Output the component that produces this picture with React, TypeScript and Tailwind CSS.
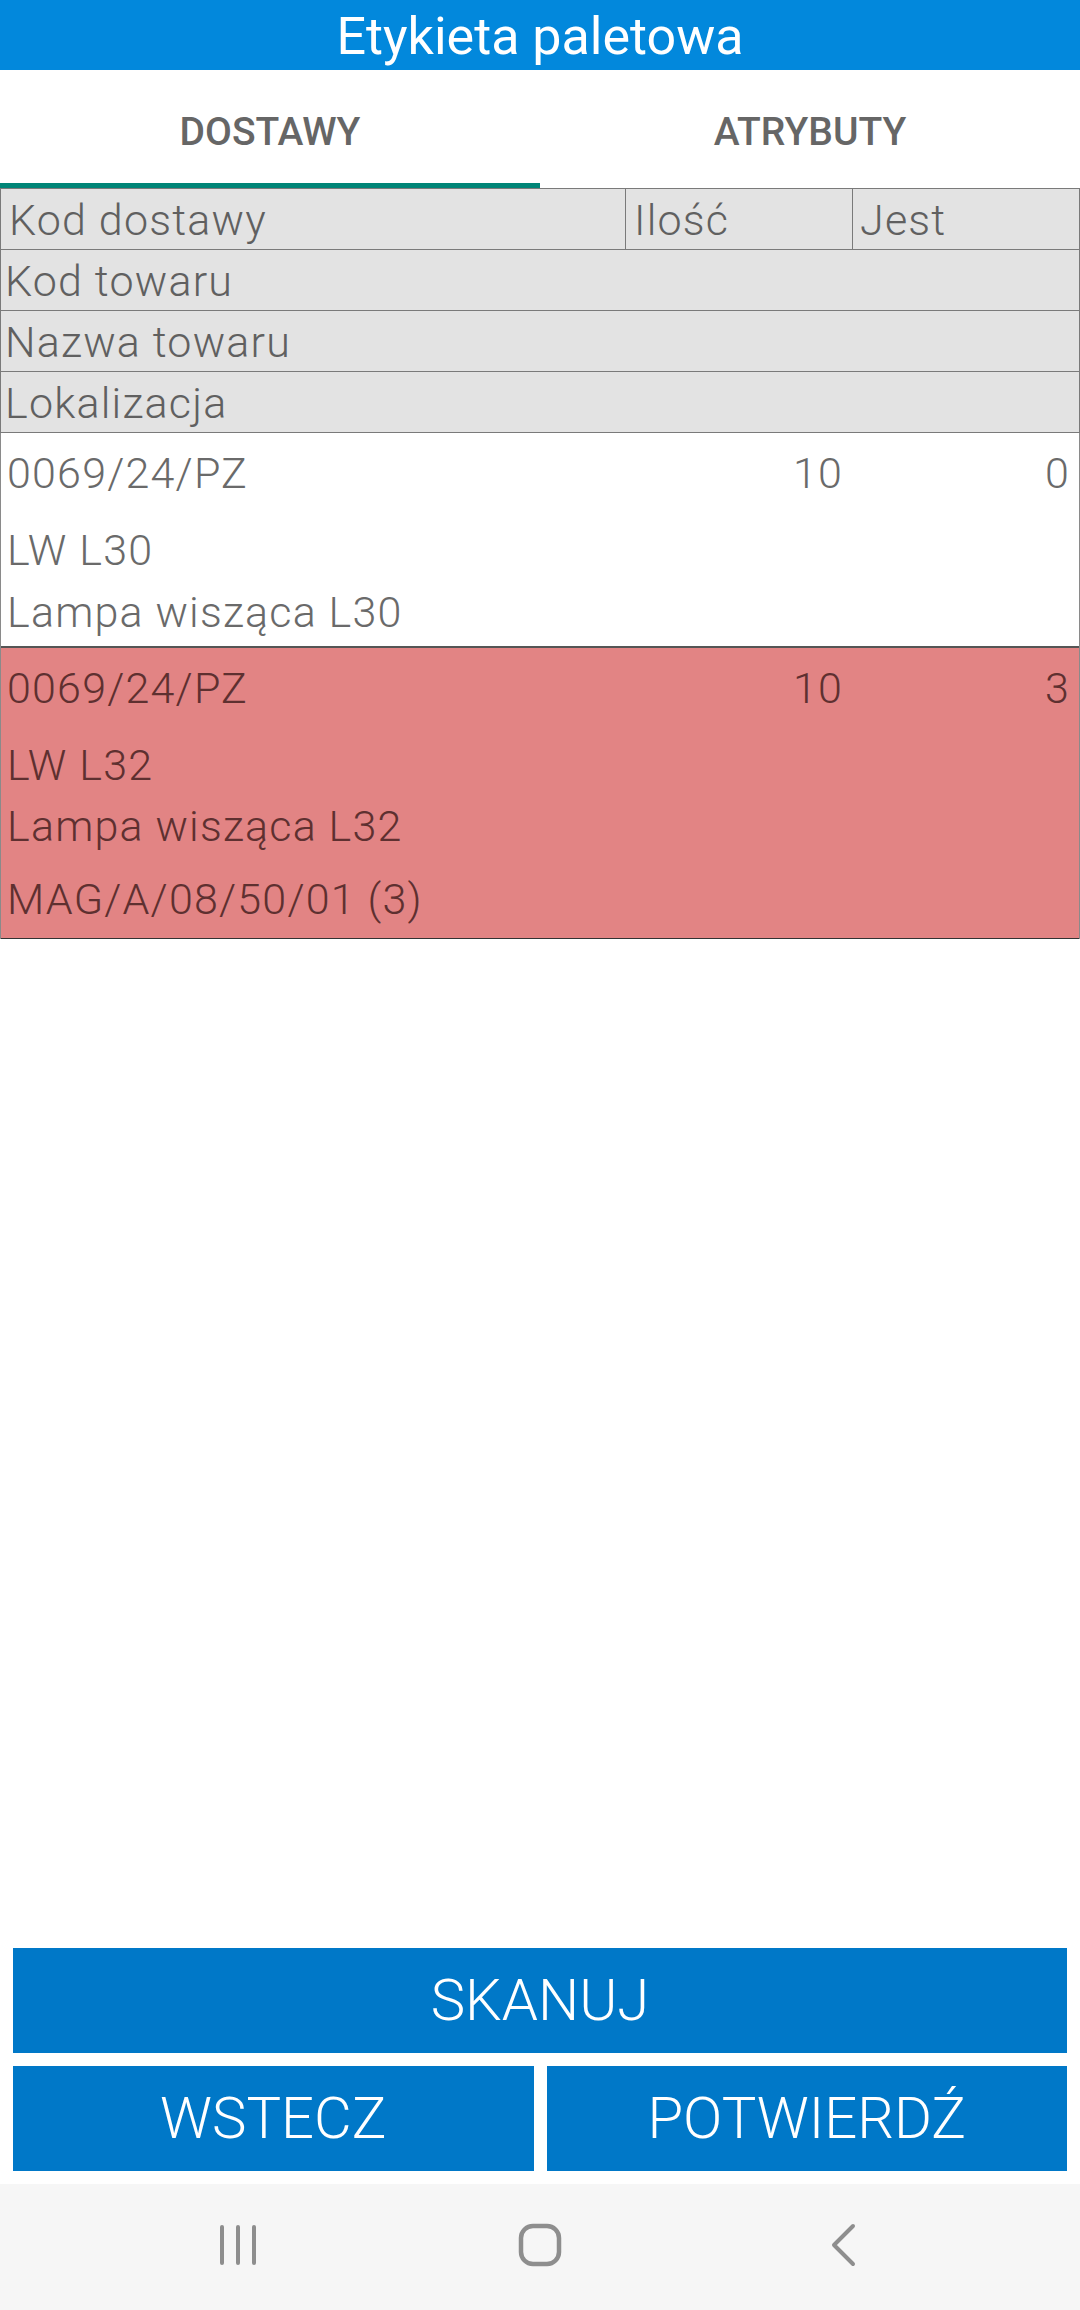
import React from 'react'

const headRows = ['Kod towaru', 'Nazwa towaru', 'Lokalizacja']

function NavIcons() {
  return (
    <div className="flex h-[126px] items-center justify-center gap-[242px] bg-[#f6f6f6] pb-[4px]">
      <div className="flex w-[60px] justify-center">
        <svg width="40" height="42" viewBox="0 0 40 42">
          <g stroke="#8e8e8e" strokeWidth="4" strokeLinecap="round">
            <line x1="4" y1="3" x2="4" y2="39" />
            <line x1="20" y1="3" x2="20" y2="39" />
            <line x1="36" y1="3" x2="36" y2="39" />
          </g>
        </svg>
      </div>
      <div className="flex w-[60px] justify-center">
        <svg width="44" height="44" viewBox="0 0 44 44">
          <rect x="3" y="3" width="38" height="38" rx="12" fill="none" stroke="#8e8e8e" strokeWidth="4.5" />
        </svg>
      </div>
      <div className="flex w-[60px] justify-center">
        <svg width="30" height="44" viewBox="0 0 30 44">
          <polyline points="26,3 7,22 26,41" fill="none" stroke="#8e8e8e" strokeWidth="4" strokeLinecap="round" strokeLinejoin="round" />
        </svg>
      </div>
    </div>
  )
}

export default function App() {
  return (
    <div className="flex h-[2310px] w-[1080px] flex-col bg-white font-['Roboto',sans-serif]">
      {/* Toolbar */}
      <div className="h-[70px] bg-[#0288dc] pt-[4px] text-center text-[52px] leading-[66px] text-white">
        Etykieta paletowa
      </div>

      {/* Tabs */}
      <div className="flex">
        <div className="flex w-1/2 flex-col">
          <div className="h-[113px] pt-[39px] text-center text-[39px] font-medium leading-[46px] text-[#666666]">
            DOSTAWY
          </div>
          <div className="h-[5px] bg-[#008577]" />
        </div>
        <div className="flex w-1/2 flex-col">
          <div className="h-[113px] pt-[39px] text-center text-[39px] font-medium leading-[46px] text-[#666666]">
            ATRYBUTY
          </div>
          <div className="h-[5px]" />
        </div>
      </div>

      {/* Table header */}
      <div className="border-x border-t border-[#7a7a7a] bg-[#e3e3e3] text-[43px] font-light tracking-[1.2px] text-[#606060]">
        <div className="grid h-[61px] grid-cols-[624px_227px_1fr] border-b border-[#7a7a7a]">
          <div className="pl-[8px] pt-[3px] leading-[57px]">Kod dostawy</div>
          <div className="border-l border-[#7a7a7a] pl-[8px] pt-[3px] leading-[57px]">Ilość</div>
          <div className="border-l border-[#7a7a7a] pl-[7px] pt-[3px] leading-[57px]">Jest</div>
        </div>
        {headRows.map((t) => (
          <div key={t} className="h-[61px] border-b border-[#7a7a7a] pl-[4px] pt-[3px] leading-[57px]">
            {t}
          </div>
        ))}
      </div>

      {/* Data rows */}
      <div className="border-x border-[#8a8a8a] text-[43px] font-light leading-[49px] tracking-[1.2px]">
        <div className="border-b-2 border-[#555555] px-[6px] pb-[9px] pt-[16px] text-[#6a6a6a]">
          <div className="grid grid-cols-[619px_227px_1fr]">
            <div>0069/24/PZ</div>
            <div className="pr-[10px] text-right">10</div>
            <div className="pr-[3px] text-right">0</div>
          </div>
          <div className="mt-[28px]">LW L30</div>
          <div className="mt-[13px]">Lampa wisząca L30</div>
        </div>
        <div className="border-b border-[#333333] bg-[#e28484] px-[6px] pb-[14px] pt-[16px] text-[#5e3030]">
          <div className="grid grid-cols-[619px_227px_1fr]">
            <div>0069/24/PZ</div>
            <div className="pr-[10px] text-right">10</div>
            <div className="pr-[3px] text-right">3</div>
          </div>
          <div className="mt-[28px]">LW L32</div>
          <div className="mt-[12px]">Lampa wisząca L32</div>
          <div className="mt-[24px]">MAG/A/08/50/01 (3)</div>
        </div>
      </div>

      <div className="flex-1" />

      {/* Buttons */}
      <div className="flex flex-col gap-[13px] px-[13px] pb-[13px] text-[58px] font-light text-white">
        <button className="h-[105px] bg-[#0078c8] leading-[105px]">SKANUJ</button>
        <div className="grid grid-cols-2 gap-[13px]">
          <button className="h-[105px] bg-[#0078c8] leading-[105px]">WSTECZ</button>
          <button className="h-[105px] bg-[#0078c8] leading-[105px]">POTWIERDŹ</button>
        </div>
      </div>

      <NavIcons />
    </div>
  )
}
